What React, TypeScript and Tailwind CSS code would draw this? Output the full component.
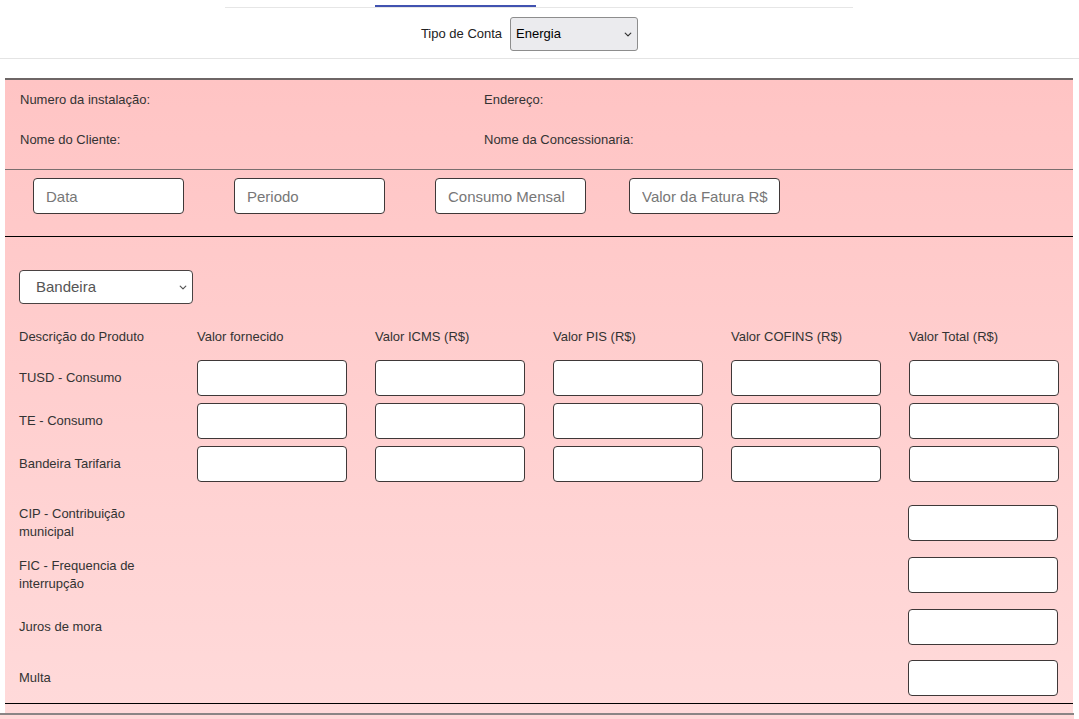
import React from "react";

const Chevron = ({ className }: { className?: string }) => (
  <svg viewBox="0 0 10 6" className={className} fill="none" stroke="currentColor" strokeWidth="1.5" strokeLinecap="round" strokeLinejoin="round">
    <path d="M1.5 1.2l3.5 3.5 3.5-3.5" />
  </svg>
);

const Cell = () => (
  <input className="h-[36px] w-[150px] rounded-[4px] border border-[#3f3838] bg-white outline-none" />
);

const fullRows = ["TUSD - Consumo", "TE - Consumo", "Bandeira Tarifaria"];
const singleRows: { label: string; mt: string }[] = [
  { label: "CIP - Contribuição municipal", mt: "mt-[23px]" },
  { label: "FIC - Frequencia de interrupção", mt: "mt-[16px]" },
  { label: "Juros de mora", mt: "mt-[16px]" },
  { label: "Multa", mt: "mt-[15px]" },
];
const headers = [
  "Descrição do Produto",
  "Valor fornecido",
  "Valor ICMS (R$)",
  "Valor PIS (R$)",
  "Valor COFINS (R$)",
  "Valor Total (R$)",
];

export default function App() {
  return (
    <div className="h-[719px] w-full overflow-hidden bg-white font-['Liberation_Sans',Arial,sans-serif] text-[13px] text-[#333]">
      {/* header */}
      <div className="border-b border-[#e4e4e4] pb-[7px] pt-[5px]">
        <div className="ml-[225px] w-[628px] border-b border-[#e6e6e6]">
          <div className="ml-[150px] h-[2px] w-[161px] bg-[#4152b0]" />
        </div>
        <div className="mt-[9px] flex items-center justify-center pr-[20px]">
          <span className="mr-[8px] text-[13px] text-[#222]">Tipo de Conta</span>
          <div className="relative h-[34px] w-[128px]">
            <select className="h-full w-full appearance-none rounded-[3px] border border-[#8d8d8d] bg-[#ebebee] pl-[5px] text-[13px] text-black outline-none">
              <option>Energia</option>
            </select>
            <Chevron className="pointer-events-none absolute right-[6px] top-[15px] h-[5px] w-[8px] text-[#333]" />
          </div>
        </div>
      </div>

      {/* pink form */}
      <div className="ml-[5px] mt-[19px] w-[1068px] border-t-2 border-[#6e6666] bg-gradient-to-b from-[#ffc4c4] to-[#ffdada] pb-[9px]">
        {/* info */}
        <div className="border-b border-[#7a6e6e] pb-[9px] pl-[15px]">
          <div className="flex h-[40px] items-center">
            <span className="w-[464px]">Numero da instalação:</span>
            <span>Endereço:</span>
          </div>
          <div className="flex h-[40px] items-center">
            <span className="w-[464px]">Nome do Cliente:</span>
            <span>Nome da Concessionaria:</span>
          </div>
        </div>

        {/* top inputs */}
        <div className="flex border-b border-black pb-[22px] pt-[8px] pl-[28px]">
          {["Data", "Periodo", "Consumo Mensal", "Valor da Fatura R$"].map((p, i) => (
            <input
              key={p}
              placeholder={p}
              className={`h-[36px] w-[151px] rounded-[4px] border border-[#3f3838] bg-white pl-[12px] pr-0 text-[15px] outline-none placeholder:text-[#777] ${
                i === 0 ? "" : i === 3 ? "ml-[43px]" : "ml-[50px]"
              }`}
            />
          ))}
        </div>

        {/* table */}
        <div className="border-b border-black pb-[7px] pl-[14px] pt-[33px]">
          <div className="relative h-[34px] w-[174px]">
            <select className="h-full w-full appearance-none rounded-[4px] border border-[#4a4242] bg-white pl-[16px] text-[15px] text-[#555] outline-none">
              <option>Bandeira</option>
            </select>
            <Chevron className="pointer-events-none absolute right-[6px] top-[15px] h-[5px] w-[8px] text-[#555]" />
          </div>

          <div className="mt-[25px] flex h-[15px] items-center">
            {headers.map((h) => (
              <span key={h} className="w-[178px] shrink-0">
                {h}
              </span>
            ))}
          </div>

          <div className="mt-[16px] flex flex-col gap-[7px]">
            {fullRows.map((r) => (
              <div key={r} className="flex items-center">
                <span className="w-[178px] shrink-0">{r}</span>
                {[0, 1, 2, 3, 4].map((i) => (
                  <div key={i} className="w-[178px] shrink-0">
                    <Cell />
                  </div>
                ))}
              </div>
            ))}
          </div>

          {singleRows.map((r) => (
            <div key={r.label} className={`flex items-center ${r.mt}`}>
              <span className="w-[889px] shrink-0">
                <span className="block max-w-[150px] leading-[18px]">{r.label}</span>
              </span>
              <Cell />
            </div>
          ))}
        </div>
      </div>

      {/* tributos */}
      <div className="w-[1074px] border-t-2 border-[#8a8585] bg-[#ffd9d9] pl-[20px] pt-[1px]">
        <div className="flex">
          <span className="w-[888px]">Tributos</span>
          <span>Valor (R$)</span>
        </div>
      </div>
    </div>
  );
}
